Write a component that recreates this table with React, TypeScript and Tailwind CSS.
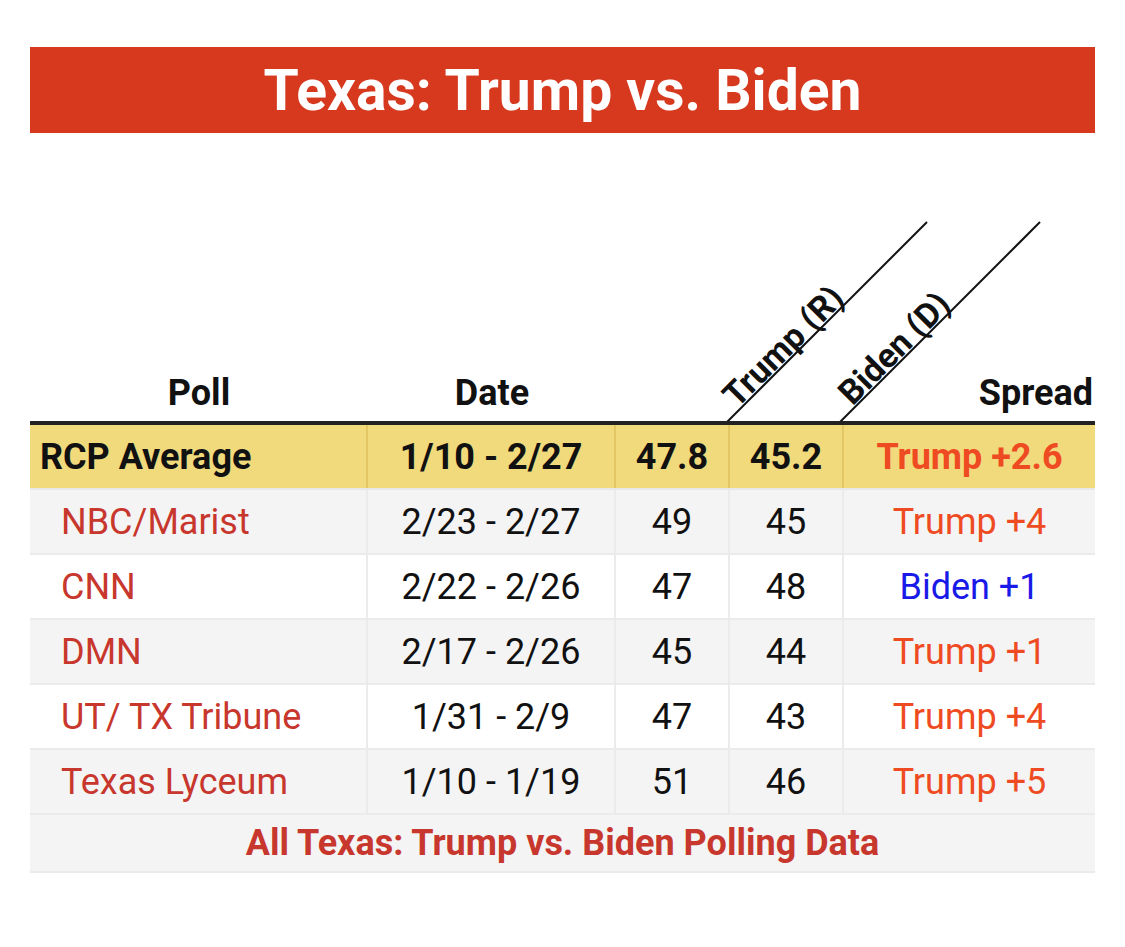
import React from "react";

type Row = { poll: string; date: string; r: string; d: string; spread: string; biden?: boolean };

const rows: Row[] = [
  { poll: "NBC/Marist", date: "2/23 - 2/27", r: "49", d: "45", spread: "Trump +4" },
  { poll: "CNN", date: "2/22 - 2/26", r: "47", d: "48", spread: "Biden +1", biden: true },
  { poll: "DMN", date: "2/17 - 2/26", r: "45", d: "44", spread: "Trump +1" },
  { poll: "UT/ TX Tribune", date: "1/31 - 2/9", r: "47", d: "43", spread: "Trump +4" },
  { poll: "Texas Lyceum", date: "1/10 - 1/19", r: "51", d: "46", spread: "Trump +5" },
];

export default function App() {
  return (
    <div className="min-h-[947px] bg-white px-[30px] pt-[47px] text-[#111]" style={{ fontFamily: "Roboto, 'Noto Sans', sans-serif" }}>
      <div className="flex h-[86px] items-center justify-center bg-[#d6391e] text-[57px] font-bold text-white leading-none">
        Texas: Trump vs. Biden
      </div>

      <div className="relative h-[292px] border-b-4 border-[#222]">
        <svg className="absolute left-0 top-0" width="1065" height="288" viewBox="0 0 1065 288">
          <line x1="697" y1="289" x2="897" y2="89" stroke="#111" strokeWidth="2" />
          <line x1="810" y1="289" x2="1010" y2="89" stroke="#111" strokeWidth="2" />
        </svg>
        <span className="absolute left-[753px] top-[213px] -translate-x-1/2 -translate-y-1/2 -rotate-45 whitespace-nowrap text-[34px] font-bold leading-none">
          Trump (R)
        </span>
        <span className="absolute left-[864px] top-[215px] -translate-x-1/2 -translate-y-1/2 -rotate-45 whitespace-nowrap text-[34px] font-bold leading-none">
          Biden (D)
        </span>
        <div className="grid h-full grid-cols-[338px_248px_114px_114px_1fr] items-end pb-[10px] text-[36px] font-bold leading-none">
          <div className="text-center">Poll</div>
          <div className="text-center">Date</div>
          <div />
          <div />
          <div className="pr-[2px] text-right">Spread</div>
        </div>
      </div>

      <div className="grid grid-cols-[338px_248px_114px_114px_1fr] border-b-2 border-[#e8e8e8] bg-[#f1da7c] text-[36px] font-bold">
        <div className="flex h-[63px] items-center border-r-2 border-[#e3c765] pl-[10px]">RCP Average</div>
        <div className="flex h-[63px] items-center justify-center border-r-2 border-[#e3c765]">1/10 - 2/27</div>
        <div className="flex h-[63px] items-center justify-center border-r-2 border-[#e3c765]">47.8</div>
        <div className="flex h-[63px] items-center justify-center border-r-2 border-[#e3c765]">45.2</div>
        <div className="flex h-[63px] items-center justify-center text-[#ef4b22]">Trump +2.6</div>
      </div>

      {rows.map((row, i) => (
        <div
          key={row.poll}
          className={`grid grid-cols-[338px_248px_114px_114px_1fr] border-b-2 border-[#ebebeb] text-[36px] ${i % 2 === 0 ? "bg-[#f4f4f4]" : "bg-white"}`}
        >
          <div className="flex h-[63px] items-center border-r-2 border-[#ebebeb] pl-[31px] text-[#c8372d]">{row.poll}</div>
          <div className="flex h-[63px] items-center justify-center border-r-2 border-[#ebebeb]">{row.date}</div>
          <div className="flex h-[63px] items-center justify-center border-r-2 border-[#ebebeb]">{row.r}</div>
          <div className="flex h-[63px] items-center justify-center border-r-2 border-[#ebebeb]">{row.d}</div>
          <div className={`flex h-[63px] items-center justify-center ${row.biden ? "text-[#1a1ae8]" : "text-[#ef4b22]"}`}>{row.spread}</div>
        </div>
      ))}

      <div className="flex h-[58px] items-center justify-center border-b-2 border-[#ebebeb] bg-[#f4f4f4] text-[36px] font-bold text-[#c8372d]">
        All Texas: Trump vs. Biden Polling Data
      </div>
    </div>
  );
}
